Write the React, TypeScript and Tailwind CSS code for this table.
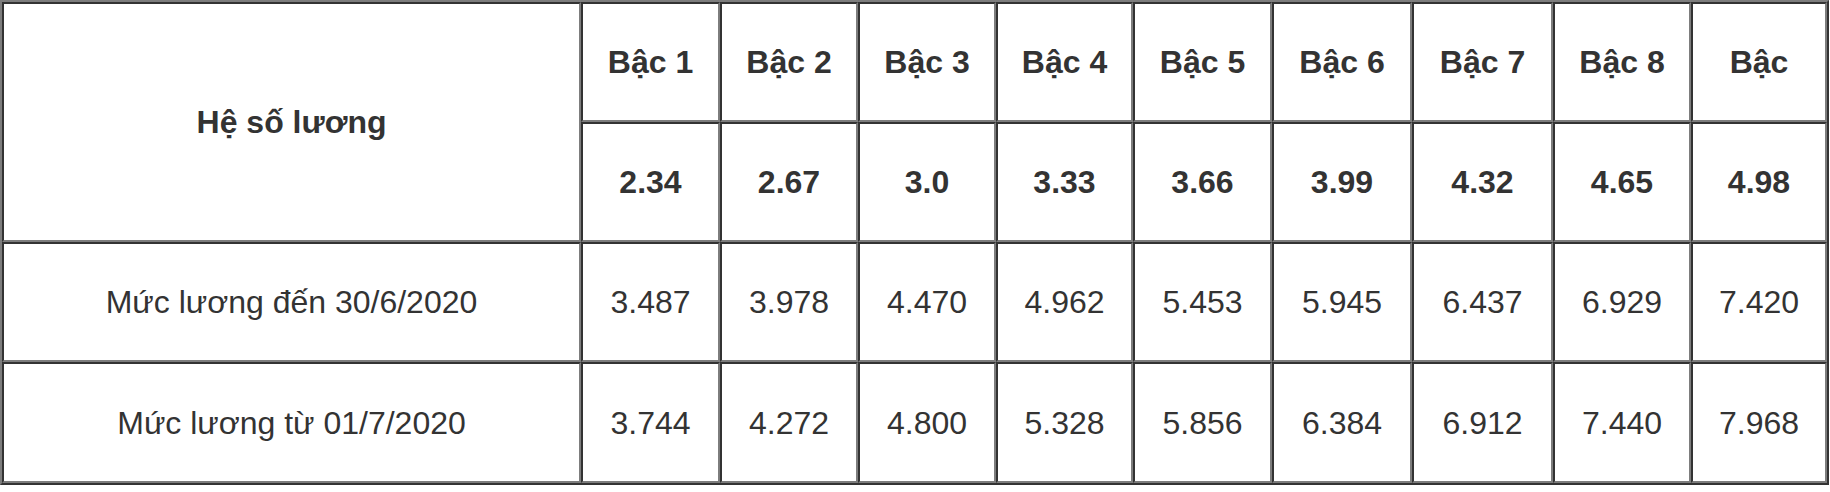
const levels = ['Bậc 1', 'Bậc 2', 'Bậc 3', 'Bậc 4', 'Bậc 5', 'Bậc 6', 'Bậc 7', 'Bậc 8', 'Bậc'];
const coefs = ['2.34', '2.67', '3.0', '3.33', '3.66', '3.99', '4.32', '4.65', '4.98'];
const before = ['3.487', '3.978', '4.470', '4.962', '5.453', '5.945', '6.437', '6.929', '7.420'];
const after = ['3.744', '4.272', '4.800', '5.328', '5.856', '6.384', '6.912', '7.440', '7.968'];

function Cell({ children, bold = false, span = false }: { children: React.ReactNode; bold?: boolean; span?: boolean }) {
  return (
    <div
      className={`flex items-center justify-center border-2 border-t-[#333333] border-l-[#333333] border-b-[#7d7d7d] border-r-[#7d7d7d] ${
        span ? 'row-span-2' : ''
      } ${bold ? 'font-bold' : ''}`}
    >
      {children}
    </div>
  );
}

export default function App() {
  return (
    <div className="w-[1830px] h-[492px] bg-white overflow-hidden">
      {/* salary table, old table border=1 look */}
      <div
        className="inline-grid grid-cols-[579px_139px_138px_138px_137px_139px_140px_141px_138px_136px] grid-rows-[120px_120px_120px_121px] border-2 border-t-[#7d7d7d] border-l-[#7d7d7d] border-b-[#333333] border-r-[#333333] text-[32px] leading-none text-[#333333]"
        style={{ fontFamily: '"Liberation Sans", Arial, sans-serif' }}
      >
        <Cell bold span>Hệ số lương</Cell>
        {levels.map((l) => (
          <Cell key={l} bold>{l}</Cell>
        ))}
        {coefs.map((c) => (
          <Cell key={c} bold>{c}</Cell>
        ))}
        <Cell>Mức lương đến 30/6/2020</Cell>
        {before.map((v) => (
          <Cell key={v}>{v}</Cell>
        ))}
        <Cell>Mức lương từ 01/7/2020</Cell>
        {after.map((v) => (
          <Cell key={v}>{v}</Cell>
        ))}
      </div>
    </div>
  );
}
